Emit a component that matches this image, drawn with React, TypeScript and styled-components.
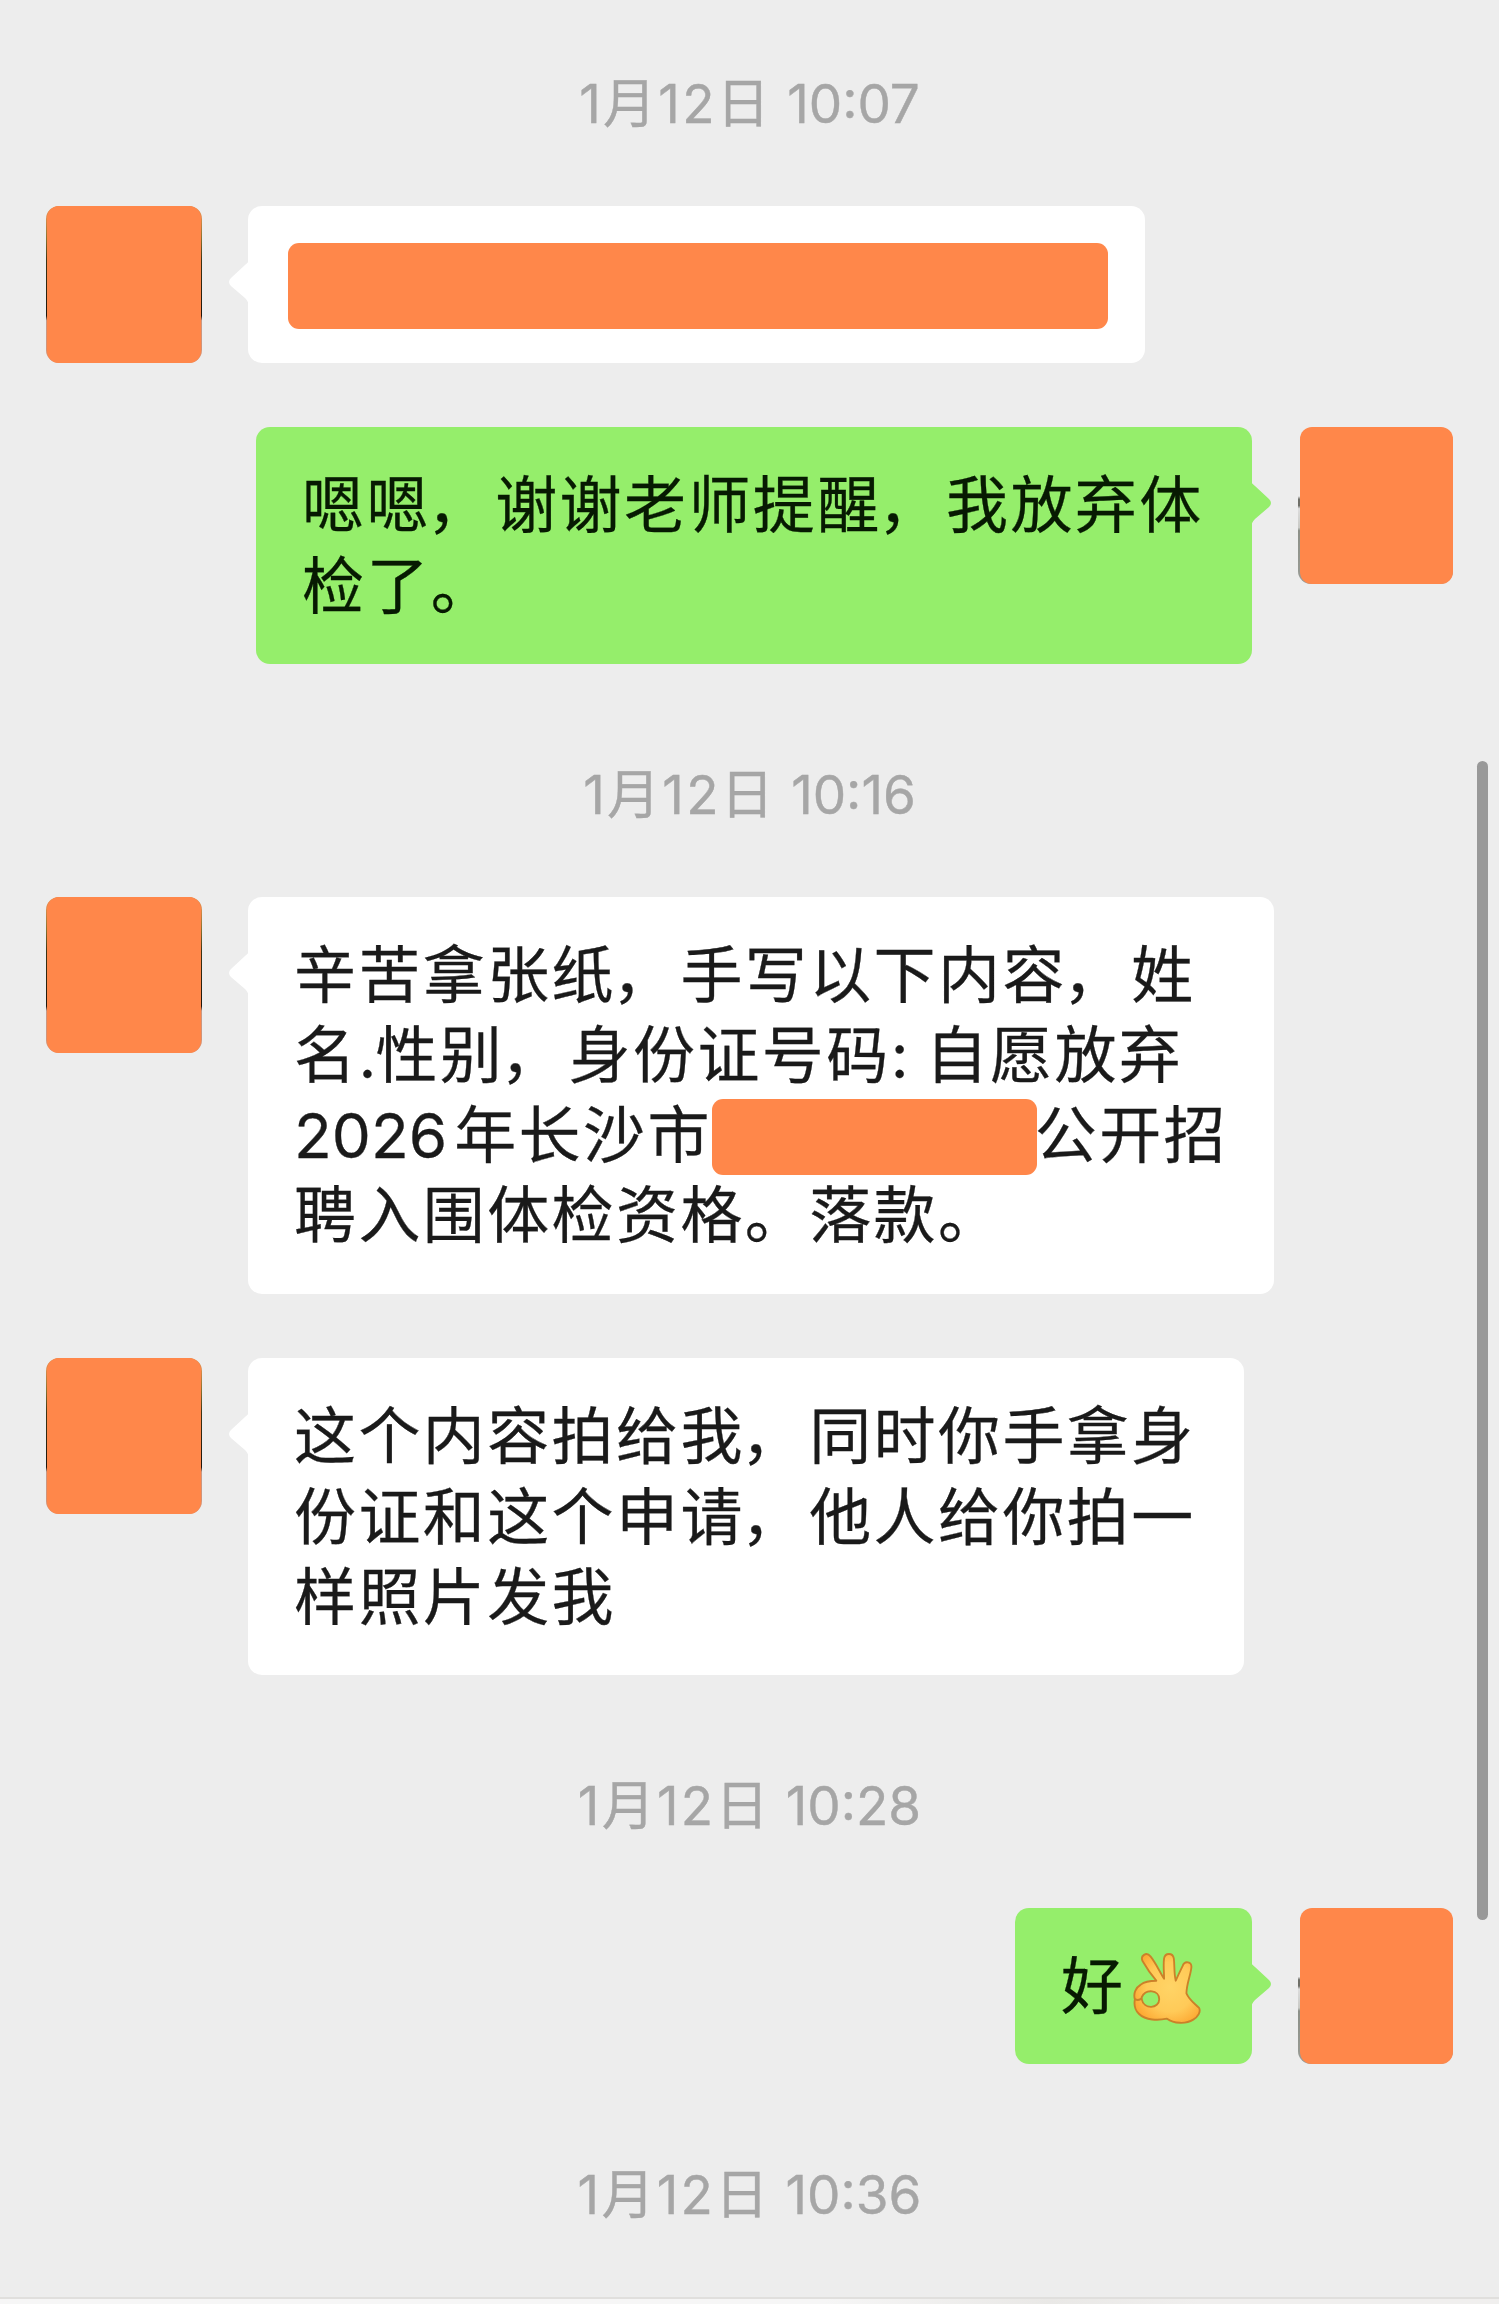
import React from "react";
import styled, { createGlobalStyle } from "styled-components";

const GlobalStyle = createGlobalStyle`
  * { box-sizing: border-box; }
  body { margin: 0; background: #ededed; }
`;

const ORANGE = "#ff874a";

const Screen = styled.main`
  position: relative;
  display: flex;
  flex-direction: column;
  width: 1499px;
  height: 2304px;
  overflow: hidden;
  background: #ededed;
  font-family: Inter, "Noto Sans CJK SC", sans-serif;
`;

const StampLine = styled.time<{ $first?: boolean }>`
  display: flex;
  justify-content: center;
  align-items: center;
  flex: none;
  height: ${(p) => (p.$first ? 206.4 : 233)}px;
  padding-top: ${(p) => (p.$first ? 2 : 29)}px;
  color: #a6a6a6;
  font-size: 53px;
  line-height: 80px;
  white-space: pre;
  -webkit-text-stroke: 0.4px #a6a6a6;
`;

const StampDate = styled.span`
  margin-right: 15px;
  letter-spacing: 2.3px;
`;

const Row = styled.section<{ $mine?: boolean; $gap?: boolean }>`
  display: flex;
  flex: none;
  flex-direction: ${(p) => (p.$mine ? "row-reverse" : "row")};
  align-items: flex-start;
  gap: 46px;
  padding: 0 46px;
  margin-top: ${(p) => (p.$gap ? 64.8 : 0)}px;
`;

const Avatar = styled.div<{ $mine?: boolean }>`
  flex: none;
  width: ${(p) => (p.$mine ? 155 : 156)}px;
  height: 156.2px;
  padding: ${(p) => (p.$mine ? "0 0 0 2px" : "0 1px")};
  border-radius: 13px;
  background: ${(p) =>
    p.$mine
      ? "linear-gradient(#ededed 44%, #6f6f68 46%, #6f6f68 50%, #dcdcdc 52%, #c9cac6 64%, #8c9088 66%, #9a9c96)"
      : "linear-gradient(#d98b4a 8%, #8d7430 20%, #3c3414 35%, #1f160c 70%, #c79a86 73%, #d9906f)"};
`;

const Cover = styled.div`
  width: 100%;
  height: 100%;
  border-radius: 12px;
  background: ${ORANGE};
`;

const Bubble = styled.div<{ $mine?: boolean; $width: number }>`
  position: relative;
  width: ${(p) => p.$width}px;
  padding: 38px 46px;
  border-radius: 14px;
  background: ${(p) => (p.$mine ? "#95ee6b" : "#ffffff")};
  color: ${(p) => (p.$mine ? "#071a02" : "#1a1a1a")};
`;

const Tail = styled.svg<{ $mine?: boolean }>`
  position: absolute;
  top: 53px;
  ${(p) => (p.$mine ? "right: -19px; transform: scaleX(-1);" : "left: -19px;")}
  width: 20px;
  height: 48px;
`;

const Line = styled.div`
  display: flex;
  align-items: center;
  height: 80.2px;
  padding-top: 2px;
  font-size: 62px;
  line-height: 80px;
  letter-spacing: 2.4px;
  white-space: pre;
  -webkit-text-stroke: 0.3px currentColor;
`;

const Latin = styled.span<{ $width: number }>`
  width: ${(p) => p.$width}px;
  letter-spacing: 0;
`;

const Comma = styled.span`
  margin: 0 4px 0 -4px;
`;

const Redaction = styled.span<{ $width: number; $height: number }>`
  flex: none;
  width: ${(p) => p.$width}px;
  height: ${(p) => p.$height}px;
  margin: 2px -2px 0 0;
  border-radius: 11px;
  background: ${ORANGE};
`;

const NameBar = styled(Line)`
  margin: 0 -6px;
`;

const OkHand = styled.svg`
  width: 70px;
  height: 73px;
  margin: 3px 0 0 7px;
`;

const Scrollbar = styled.div`
  position: absolute;
  top: 761px;
  right: 11px;
  width: 11px;
  height: 1159px;
  border-radius: 6px;
  background: #999999;
`;

const InputEdge = styled.footer`
  flex: none;
  height: 8px;
  border-top: 2px solid #e0dfdd;
  background: linear-gradient(90deg, #f6f6f6 55%, #e9e8e6 70%, #f0efee 80%);
`;

function Stamp({ first, date, time }: { first?: boolean; date: string; time: string }) {
  return (
    <StampLine $first={first}>
      <StampDate>{date}</StampDate>
      {time}
    </StampLine>
  );
}

function BubbleTail({ mine }: { mine?: boolean }) {
  return (
    <Tail $mine={mine} viewBox="0 0 20 48">
      <path
        d="M20 0 C20 3 18 4 16 6 L2 19 Q-2 23 2 27 L16 39 Q20 43 20 48 Z"
        fill={mine ? "#95ee6b" : "#ffffff"}
      />
    </Tail>
  );
}

type MessageProps = { mine?: boolean; gap?: boolean; width: number; children: React.ReactNode };

function Message({ mine, gap, width, children }: MessageProps) {
  return (
    <Row $mine={mine} $gap={gap}>
      <Avatar $mine={mine}>
        <Cover />
      </Avatar>
      <Bubble $mine={mine} $width={width}>
        <BubbleTail mine={mine} />
        {children}
      </Bubble>
    </Row>
  );
}

function OkHandEmoji() {
  return (
    <OkHand viewBox="0 0 72 74" role="img" aria-label="OK">
      <defs>
        <radialGradient id="skin" cx="0.55" cy="0.48" r="0.6">
          <stop offset="0" stopColor="#ffd466" />
          <stop offset="0.6" stopColor="#ffca58" />
          <stop offset="1" stopColor="#fda832" />
        </radialGradient>
      </defs>
      <path
        fillRule="evenodd"
        d="M11 9 C8 3 15 -1 19 4 C24 10 28 19 33 27 C33 20 32 13 33 6 C34 0 42 0 43 6 C44 13 43 21 45 29 C48 22 50 18 52 14 C54 8 62 9 61 16 C60 24 56 33 56 42 C59 49 64 52 69 57 C71 61 68 66 63 69 C55 74 43 73 36 68 C27 70 14 70 7 63 C3 59 2 53 3 48 C1 42 4 36 9 33 C14 29 20 29 25 29 C19 22 15 16 11 9 Z M10 48 C12 59 28 58 28 48 C28 38 14 37 10 46 Z"
        fill="url(#skin)"
        stroke="#cb8129"
        strokeWidth="1.9"
        strokeLinejoin="round"
      />
      <path d="M3 48 Q7 50 10 47" fill="none" stroke="#cb8129" strokeWidth="1.9" />
    </OkHand>
  );
}

export default function App() {
  return (
    <Screen>
      <GlobalStyle />
      <Stamp first date="1月12日" time="10:07" />
      <Message width={897}>
        <NameBar>
          <Redaction $width={820} $height={86} />
        </NameBar>
      </Message>
      <Message mine gap width={996}>
        <Line>
          嗯嗯<Comma>，</Comma>谢谢老师提醒<Comma>，</Comma>我放弃体
        </Line>
        <Line>检了。</Line>
      </Message>
      <Stamp date="1月12日" time="10:16" />
      <Message width={1026}>
        <Line>
          辛苦拿张纸<Comma>，</Comma>手写以下内容<Comma>，</Comma>姓
        </Line>
        <Line>
          名<Latin $width={17}>.</Latin>性别<Comma>，</Comma>身份证号码<Latin $width={35}>: </Latin>自愿放弃
        </Line>
        <Line>
          <Latin $width={164}>2026</Latin>年长沙市
          <Redaction $width={325} $height={76} />
          公开招
        </Line>
        <Line>聘入围体检资格。落款。</Line>
      </Message>
      <Message gap width={996}>
        <Line>
          这个内容拍给我<Comma>，</Comma>同时你手拿身
        </Line>
        <Line>
          份证和这个申请<Comma>，</Comma>他人给你拍一
        </Line>
        <Line>样照片发我</Line>
      </Message>
      <Stamp date="1月12日" time="10:28" />
      <Message mine width={237}>
        <Line>
          好<OkHandEmoji />
        </Line>
      </Message>
      <Stamp date="1月12日" time="10:36" />
      <InputEdge />
      <Scrollbar />
    </Screen>
  );
}
